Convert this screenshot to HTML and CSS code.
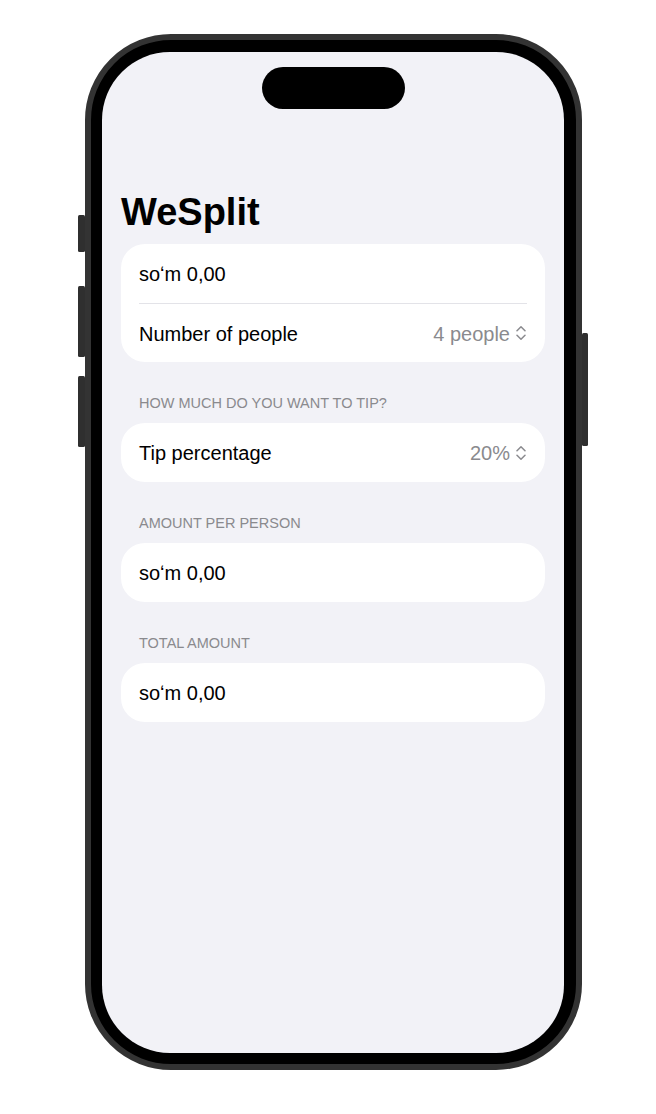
FILE: index.html
```html
<!DOCTYPE html>
<html lang="en">
<head>
<meta charset="utf-8">
<title>WeSplit</title>
<link rel="stylesheet" href="styles.css">
</head>
<body>
<div class="stage">
  <div class="phone">
    <span class="hw-btn action"></span>
    <span class="hw-btn vol-up"></span>
    <span class="hw-btn vol-down"></span>
    <span class="hw-btn power"></span>
    <div class="screen">
      <div class="island"></div>
      <h1 class="title">WeSplit</h1>

      <div class="card">
        <div class="row">
          <span class="label">soʻm 0,00</span>
        </div>
        <div class="row">
          <span class="label">Number of people</span>
          <span class="value">4 people
            <svg class="updown" viewBox="0 0 10 16" width="10" height="16" aria-hidden="true">
              <path d="M1 5.8 L5 1.8 L9 5.8 M1 10.2 L5 14.2 L9 10.2" fill="none" stroke="currentColor" stroke-width="1.5" stroke-linecap="round" stroke-linejoin="round"/>
            </svg>
          </span>
        </div>
      </div>

      <div class="section-header">HOW MUCH DO YOU WANT TO TIP?</div>
      <div class="card">
        <div class="row">
          <span class="label">Tip percentage</span>
          <span class="value">20%
            <svg class="updown" viewBox="0 0 10 16" width="10" height="16" aria-hidden="true">
              <path d="M1 5.8 L5 1.8 L9 5.8 M1 10.2 L5 14.2 L9 10.2" fill="none" stroke="currentColor" stroke-width="1.5" stroke-linecap="round" stroke-linejoin="round"/>
            </svg>
          </span>
        </div>
      </div>

      <div class="section-header">AMOUNT PER PERSON</div>
      <div class="card">
        <div class="row">
          <span class="label">soʻm 0,00</span>
        </div>
      </div>

      <div class="section-header">TOTAL AMOUNT</div>
      <div class="card">
        <div class="row">
          <span class="label">soʻm 0,00</span>
        </div>
      </div>
    </div>
  </div>
</div>
</body>
</html>
```

FILE: styles.css
```css
* { box-sizing: border-box; }

html, body {
  margin: 0;
  padding: 0;
  background: #ffffff;
}

body {
  width: 656px;
  height: 1114px;
  overflow: hidden;
  font-family: "Liberation Sans", Arial, sans-serif;
}

.stage {
  padding: 34px 0 0 85px;
}

.phone {
  position: relative;
  width: 497px;
  height: 1036px;
  border: 6px solid #333333;
  border-radius: 86px;
  background: #000000;
  padding: 12px 12px 11px 11px;
}

.hw-btn {
  position: absolute;
  width: 7px;
  background: #2f2f2f;
  border-radius: 1.5px;
}
.hw-btn.action   { left: -13px; top: 175px; height: 37px; }
.hw-btn.vol-up   { left: -13px; top: 246px; height: 71px; }
.hw-btn.vol-down { left: -13px; top: 336px; height: 71px; }
.hw-btn.power    { right: -12px; top: 293px; height: 113px; width: 6px; }

.screen {
  position: relative;
  width: 462px;
  height: 1001px;
  border-radius: 68px;
  background: #f2f2f7;
  overflow: hidden;
  padding: 137px 19px 0 19px;
}

.island {
  position: absolute;
  top: 15px;
  left: 50%;
  width: 143px;
  height: 42px;
  margin-left: -71.5px;
  border-radius: 21px;
  background: #000000;
}

.title {
  margin: 0 0 9px 0;
  font-size: 38px;
  line-height: 46px;
  font-weight: 700;
  color: #000000;
  letter-spacing: 0;
}

.card {
  background: #ffffff;
  border-radius: 24px;
  padding: 0 18px;
}

.row {
  display: flex;
  align-items: center;
  justify-content: space-between;
  height: 59px;
  padding-top: 2px;
  font-size: 20px;
  color: #000000;
}

.row + .row {
  border-top: 1px solid #e3e3e8;
}

.value {
  display: flex;
  align-items: center;
  gap: 6px;
  color: #8a8a8e;
}

.updown {
  display: block;
  color: #8a8a8e;
  margin-right: 1px;
  margin-top: -2px;
}

.section-header {
  margin: 33px 0 11px 18px;
  font-size: 14.5px;
  line-height: 17px;
  color: #8a8a8e;
}
```
